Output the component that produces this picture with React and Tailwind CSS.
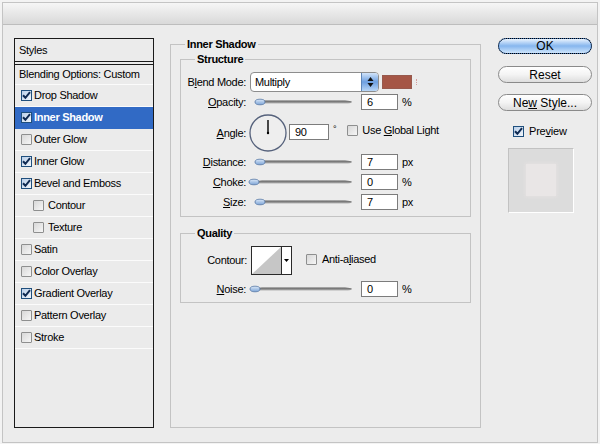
import React from "react";

function Check({ checked, className = "" }) {
  if (checked) {
    return (
      <div className={"w-[11px] h-[11px] shrink-0 border border-[#1f4f7d] bg-gradient-to-br from-[#b9cfe9] to-[#f2f6fb] flex items-center justify-center " + className}>
        <svg width="9" height="9" viewBox="0 0 9 9">
          <path d="M1 4.2 L3.4 6.8 L8 1.2" stroke="#0f2a52" strokeWidth="2" fill="none" />
        </svg>
      </div>
    );
  }
  return (
    <div className={"w-[11px] h-[11px] shrink-0 border border-[#8e8f8f] rounded-[1px] bg-gradient-to-br from-[#d8d8d8] to-[#f6f6f6] " + className} />
  );
}

function Slider({ thumb }) {
  return (
    <svg width="99" height="12" viewBox="0 0 99 12" className="overflow-visible shrink-0">
      <defs>
        <linearGradient id="trk" x1="0" y1="0" x2="0" y2="1">
          <stop offset="0" stopColor="#5c5c5c" />
          <stop offset="1" stopColor="#b4b4b4" />
        </linearGradient>
        <linearGradient id="thm" x1="0" y1="0" x2="0" y2="1">
          <stop offset="0" stopColor="#dce9f8" />
          <stop offset="1" stopColor="#7ba3d6" />
        </linearGradient>
      </defs>
      <path d="M1 6 Q2 4.5 8 4.5 L91 4.5 Q97 4.5 98 6 Q97 7.5 91 7.5 L8 7.5 Q2 7.5 1 6 Z" fill="url(#trk)" />
      <ellipse cx={thumb} cy="6" rx="5" ry="2.8" fill="url(#thm)" stroke="#5677a6" strokeWidth="0.8" />
    </svg>
  );
}

function Box({ value, w = "w-[37px]" }) {
  return (
    <div className={w + " h-[16px] shrink-0 bg-white border border-[#7c7c7c] pl-[5px] text-[11px] leading-[14px] text-black"}>
      {value}
    </div>
  );
}

function SliderRow({ label, value, unit, thumb, mt = "mt-[2px]" }) {
  return (
    <div className={"flex items-center h-[18px] " + mt}>
      <div className="w-[65px] text-right">{label}</div>
      <div className="ml-[8px] flex items-center">
        <Slider thumb={thumb} />
      </div>
      <div className="ml-[8px]">
        <Box value={value} />
      </div>
      <div className="ml-[4px]">{unit}</div>
    </div>
  );
}

const U = ({ children }) => <span className="underline underline-offset-[1px]">{children}</span>;

const items = [
  { label: "Drop Shadow", checked: true },
  { label: "Inner Shadow", checked: true, selected: true },
  { label: "Outer Glow" },
  { label: "Inner Glow", checked: true },
  { label: "Bevel and Emboss", checked: true },
  { label: "Contour", indent: true },
  { label: "Texture", indent: true },
  { label: "Satin" },
  { label: "Color Overlay" },
  { label: "Gradient Overlay", checked: true },
  { label: "Pattern Overlay" },
  { label: "Stroke" },
];

export default function App() {
  return (
    <div className="w-[600px] h-[444px] bg-[#f3f3f3] overflow-hidden font-['Liberation_Sans',Arial,sans-serif] text-[11px] text-black tracking-[-0.3px]">
      <div className="mx-[2px] mt-[2px] h-[441px] border border-[#c4c4c4] bg-[#ececec] flex flex-col">
        <div className="h-[22px] shrink-0 border-b border-[#bdbdbd] bg-gradient-to-b from-[#f6f6f6] to-[#d9d9d9]" />
        <div className="flex items-start pl-[11px] pt-[12px]">
          {/* Styles list */}
          <div className="mt-[1px] w-[140px] h-[390px] shrink-0 border border-[#1a1a1a] bg-[#ebebeb] flex flex-col">
            <div className="h-[23px] border-b border-[#1a1a1a] pl-[4px] flex items-center">Styles</div>
            <div className="h-[2px]" />
            <div className="h-[21px] border-t border-[#1a1a1a] border-b border-b-[#fbfbfb] pl-[4px] flex items-center">
              Blending Options: Custom
            </div>
            {items.map((it) => (
              <div
                key={it.label}
                className={
                  "h-[22px] flex items-center border-b " +
                  (it.selected ? "bg-[#316ac5] border-[#316ac5] text-white font-bold" : "border-[#fbfbfb]") +
                  (it.indent ? " pl-[18px]" : " pl-[6px]")
                }
              >
                <Check checked={it.checked} />
                <span className={it.indent ? "ml-[4px]" : "ml-[2px]"}>{it.label}</span>
              </div>
            ))}
          </div>

          {/* Middle panel */}
          <fieldset className="ml-[16px] w-[311px] h-[391px] shrink-0 border border-[#c3c3c3] px-[9px]">
            <legend className="ml-[5px] px-[2px] font-bold leading-[14px]">Inner Shadow</legend>

            <fieldset className="mt-[1px] border border-[#c3c3c3] pb-[5px]">
              <legend className="ml-[14px] px-[2px] font-bold leading-[14px]">Structure</legend>
              <div className="flex items-center h-[20px] mt-[6px]">
                <div className="w-[65px] text-right">B<U>l</U>end Mode:</div>
                <div className="ml-[4px] w-[129px] h-[20px] flex border border-[#8d8d8d] rounded-[4px] bg-white overflow-hidden">
                  <div className="flex-1 pl-[4px] flex items-center">Multiply</div>
                  <div className="w-[17px] border-l border-[#5f86b8] bg-gradient-to-b from-[#d2e4f9] via-[#6d9fe0] to-[#b9d6f6] flex items-center justify-center">
                    <svg width="7" height="12" viewBox="0 0 7 12">
                      <path d="M3.5 1 L6.5 5 L0.5 5 Z" fill="#111" />
                      <path d="M3.5 11 L6.5 7 L0.5 7 Z" fill="#111" />
                    </svg>
                  </div>
                </div>
                <div className="ml-[3px] w-[30px] h-[14px] bg-[#a55646] border border-[#97594d]" />
                <div className="ml-[4px] h-[6px] w-px border-l border-dotted border-[#d4a0a0]" />
              </div>
              <SliderRow label={<><U>O</U>pacity:</>} value="6" unit="%" thumb={6} mt="mt-[1px]" />
              <div className="flex items-center h-[38px] mt-[3px]">
                <div className="w-[65px] text-right"><U>A</U>ngle:</div>
                <svg width="38" height="38" viewBox="0 0 38 38" className="ml-[3px] shrink-0">
                  <circle cx="19" cy="19" r="18" fill="#eeeeee" stroke="#56627c" strokeWidth="1.3" />
                  <line x1="19" y1="19" x2="19" y2="6" stroke="#000" strokeWidth="1.4" />
                  <circle cx="19" cy="19" r="1.2" fill="#000" />
                </svg>
                <div className="ml-[2px] mb-[2px]">
                  <Box value="90" w="w-[40px]" />
                </div>
                <div className="ml-[4px] self-start mt-[9px] text-[9px]">°</div>
                <div className="ml-[11px] mb-[5px] flex items-center">
                  <Check />
                  <span className="ml-[4px]">Use <U>G</U>lobal Light</span>
                </div>
              </div>
              <SliderRow label={<><U>D</U>istance:</>} value="7" unit="px" thumb={6} mt="mt-[1px]" />
              <SliderRow label={<><U>C</U>hoke:</>} value="0" unit="%" thumb={0} />
              <SliderRow label={<><U>S</U>ize:</>} value="7" unit="px" thumb={6} />
            </fieldset>

            <fieldset className="mt-[9px] border border-[#c3c3c3] pb-[4px]">
              <legend className="ml-[14px] px-[2px] font-bold leading-[14px]">Quality</legend>
              <div className="flex items-center h-[29px] mt-[6px]">
                <div className="w-[66px] text-right">Contour:</div>
                <div className="ml-[4px] w-[41px] h-[29px] flex border border-[#2a2a2a] bg-white">
                  <svg width="29" height="27" viewBox="0 0 29 27" className="shrink-0">
                    <path d="M0 27 L29 0 L29 27 Z" fill="#c6c6c6" />
                  </svg>
                  <div className="flex-1 border-l border-[#2a2a2a] flex items-center justify-center">
                    <svg width="5" height="3" viewBox="0 0 5 3">
                      <path d="M0 0 L5 0 L2.5 3 Z" fill="#000" />
                    </svg>
                  </div>
                </div>
                <div className="ml-[14px] mb-[2px] flex items-center">
                  <Check />
                  <span className="ml-[5px]">Anti-a<U>l</U>iased</span>
                </div>
              </div>
              <SliderRow label={<><U>N</U>oise:</>} value="0" unit="%" thumb={1} mt="mt-[5px]" />
            </fieldset>
          </fieldset>

          {/* Right column */}
          <div className="ml-[17px] mt-[1px] w-[94px] shrink-0 flex flex-col text-[12px] tracking-normal">
            <div className="h-[16px] rounded-full border border-[#3a6cad] bg-gradient-to-b from-[#eaf3fd] via-[#86b6ee] to-[#cfe5fb] outline-1 outline-dotted outline-black outline-offset-[-1px] flex items-center justify-center leading-none">
              <span>OK</span>
            </div>
            <div className="mt-[12px] h-[17px] rounded-full border border-[#8a8a8a] bg-gradient-to-b from-white via-[#f4f4f4] to-[#dedede] flex items-center justify-center leading-none">
              <span>Reset</span>
            </div>
            <div className="mt-[11px] h-[17px] rounded-full border border-[#8a8a8a] bg-gradient-to-b from-white via-[#f4f4f4] to-[#dedede] flex items-center justify-center leading-none">
              <span>Ne<U>w</U> Style...</span>
            </div>
            <div className="mt-[12px] ml-[15px] flex items-center text-[11px] tracking-[-0.2px]">
              <Check checked />
              <span className="ml-[5px]">Pre<U>v</U>iew</span>
            </div>
            <div className="mt-[8px] ml-[10px] w-[66px] h-[65px] border-t border-l border-[#c2c2c2] border-b border-r border-b-white border-r-white bg-[#dcdcdc] flex items-center justify-center">
              <div className="w-[30px] h-[32px] bg-[#e9e6e6] shadow-[0_0_3px_1px_#e4e1e1]" />
            </div>
          </div>
        </div>
      </div>
    </div>
  );
}
